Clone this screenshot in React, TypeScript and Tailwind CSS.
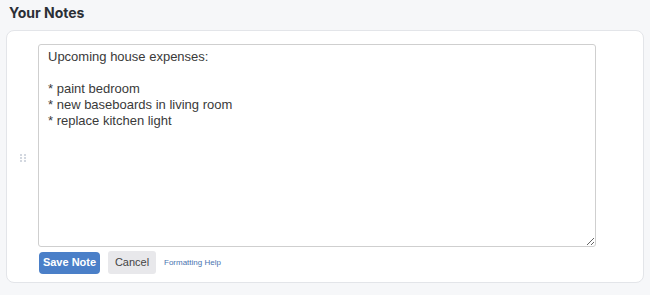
import React, { useState } from 'react';

const initialNote = `Upcoming house expenses:

* paint bedroom
* new baseboards in living room
* replace kitchen light`;

const DragHandle = () => (
  <svg width="6" height="8" viewBox="0 0 6 8" className="text-[#c5cbd6]">
    <circle cx="1" cy="1" r="1" fill="currentColor" />
    <circle cx="5" cy="1" r="1" fill="currentColor" />
    <circle cx="1" cy="4" r="1" fill="currentColor" />
    <circle cx="5" cy="4" r="1" fill="currentColor" />
    <circle cx="1" cy="7" r="1" fill="currentColor" />
    <circle cx="5" cy="7" r="1" fill="currentColor" />
  </svg>
);

const App: React.FC = () => {
  const [note, setNote] = useState(initialNote);

  return (
    <div className="min-h-[295px] w-[650px] bg-[#f6f7f9] font-['Liberation_Sans',Arial,sans-serif]">
      <h2 className="px-[9px] pt-[3px] h-[28px] text-[14px] font-bold text-[#2b2f36] font-['Inter',sans-serif] leading-[20px]">
        Your Notes
      </h2>
      <div className="mx-[6px] mt-[2px] h-[253px] rounded-[8px] border border-[#e3e5e9] bg-white flex">
        <div className="w-[31px] flex items-center justify-center pt-[2px]">
          <DragHandle />
        </div>
        <div className="flex-1 pt-[13px]">
          <textarea
            value={note}
            onChange={(e) => setNote(e.target.value)}
            className="block w-[558px] h-[203px] rounded-[3px] border border-[#cfcfcf] bg-white px-[9px] py-[4px] text-[13px] leading-[16px] text-[#3a3a3a] outline-none resize"
          />
          <div className="mt-[4px] flex items-center gap-[8px] pl-[1px]">
            <button className="h-[22px] w-[61px] rounded-[4px] bg-[#4a7fc8] text-[11px] font-bold text-white">
              Save Note
            </button>
            <button className="h-[23px] w-[48px] rounded-[3px] bg-[#e8e8eb] text-[11px] text-[#444]">
              Cancel
            </button>
            <a href="#" className="text-[8px] text-[#4a74b0]">
              Formatting Help
            </a>
          </div>
        </div>
      </div>
    </div>
  );
};

export default App;
